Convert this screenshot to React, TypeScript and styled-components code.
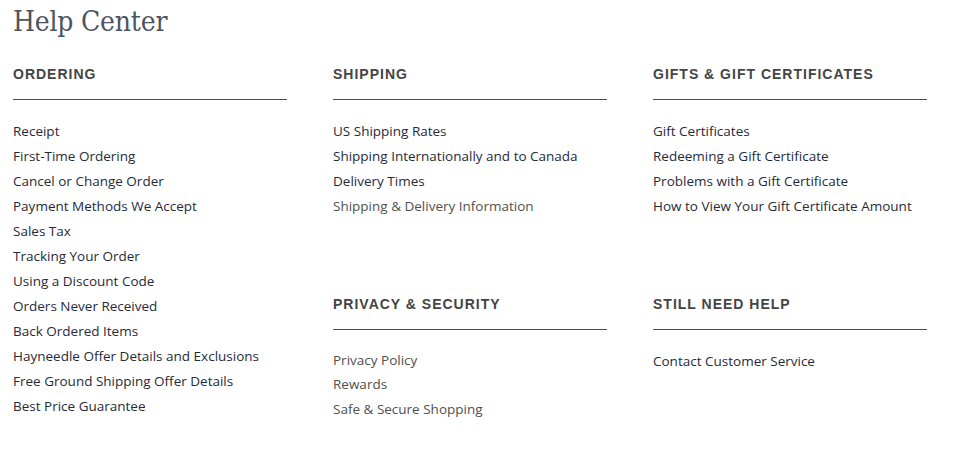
import React from "react";
import styled, { createGlobalStyle } from "styled-components";

const Global = createGlobalStyle`
  html, body { margin: 0; padding: 0; background: #ffffff; }
  body { font-family: "Open Sans", "Liberation Sans", sans-serif; }
`;

const Page = styled.div`
  padding: 4px 0 0 13px;
  width: 959px;
  box-sizing: border-box;
`;

const Title = styled.h1`
  margin: 0;
  font-family: "DejaVu Serif Condensed", "DejaVu Serif", serif;
  font-stretch: condensed;
  font-weight: 400;
  font-size: 28px;
  line-height: 36px;
  color: #4b5460;
  letter-spacing: -0.2px;
`;

const Grid = styled.div`
  margin-top: 24px;
  display: grid;
  grid-template-columns: repeat(3, 320px);
  align-items: start;
`;

const Column = styled.div`
  display: flex;
  flex-direction: column;
  gap: 75px;
  width: 274px;
`;

const Section = styled.section`
  display: flex;
  flex-direction: column;
`;

const Heading = styled.h2`
  margin: 0;
  padding-bottom: 15px;
  border-bottom: 1px solid #4d4d4d;
  font-family: "Liberation Sans", Arial, sans-serif;
  font-weight: 700;
  font-size: 14px;
  line-height: 20px;
  letter-spacing: 1px;
  color: #444444;
`;

const List = styled.ul`
  list-style: none;
  margin: 19px 0 0;
  padding: 0;
  font-family: "Open Sans", "Liberation Sans", sans-serif;
  font-size: 13.5px;
`;

const Item = styled.li<{ $tight?: boolean }>`
  line-height: ${(p) => (p.$tight ? "23px" : "25px")};
  height: ${(p) => (p.$tight ? "23px" : "25px")};
`;

const Link = styled.a<{ $muted?: boolean }>`
  color: ${(p) => (p.$muted ? "#505050" : "#1f2b3a")};
  text-decoration: none;
`;

type LinkDef = { label: string; muted?: boolean; tight?: boolean };
type SectionDef = { title: string; links: LinkDef[] };

const columns: SectionDef[][] = [
  [
    {
      title: "ORDERING",
      links: [
        { label: "Receipt" },
        { label: "First-Time Ordering" },
        { label: "Cancel or Change Order" },
        { label: "Payment Methods We Accept" },
        { label: "Sales Tax" },
        { label: "Tracking Your Order" },
        { label: "Using a Discount Code" },
        { label: "Orders Never Received" },
        { label: "Back Ordered Items" },
        { label: "Hayneedle Offer Details and Exclusions" },
        { label: "Free Ground Shipping Offer Details" },
        { label: "Best Price Guarantee" },
      ],
    },
  ],
  [
    {
      title: "SHIPPING",
      links: [
        { label: "US Shipping Rates" },
        { label: "Shipping Internationally and to Canada" },
        { label: "Delivery Times" },
        { label: "Shipping & Delivery Information", muted: true },
      ],
    },
    {
      title: "PRIVACY & SECURITY",
      links: [
        { label: "Privacy Policy", muted: true, tight: true },
        { label: "Rewards", muted: true },
        { label: "Safe & Secure Shopping", muted: true },
      ],
    },
  ],
  [
    {
      title: "GIFTS & GIFT CERTIFICATES",
      links: [
        { label: "Gift Certificates" },
        { label: "Redeeming a Gift Certificate" },
        { label: "Problems with a Gift Certificate" },
        { label: "How to View Your Gift Certificate Amount" },
      ],
    },
    {
      title: "STILL NEED HELP",
      links: [{ label: "Contact Customer Service" }],
    },
  ],
];

export default function App() {
  return (
    <>
      <Global />
      <Page>
        <Title>Help Center</Title>
        <Grid>
          {columns.map((col, ci) => (
            <Column key={ci}>
              {col.map((s) => (
                <Section key={s.title}>
                  <Heading>{s.title}</Heading>
                  <List>
                    {s.links.map((l) => (
                      <Item key={l.label} $tight={l.tight}>
                        <Link href="#" $muted={l.muted}>
                          {l.label}
                        </Link>
                      </Item>
                    ))}
                  </List>
                </Section>
              ))}
            </Column>
          ))}
        </Grid>
      </Page>
    </>
  );
}
